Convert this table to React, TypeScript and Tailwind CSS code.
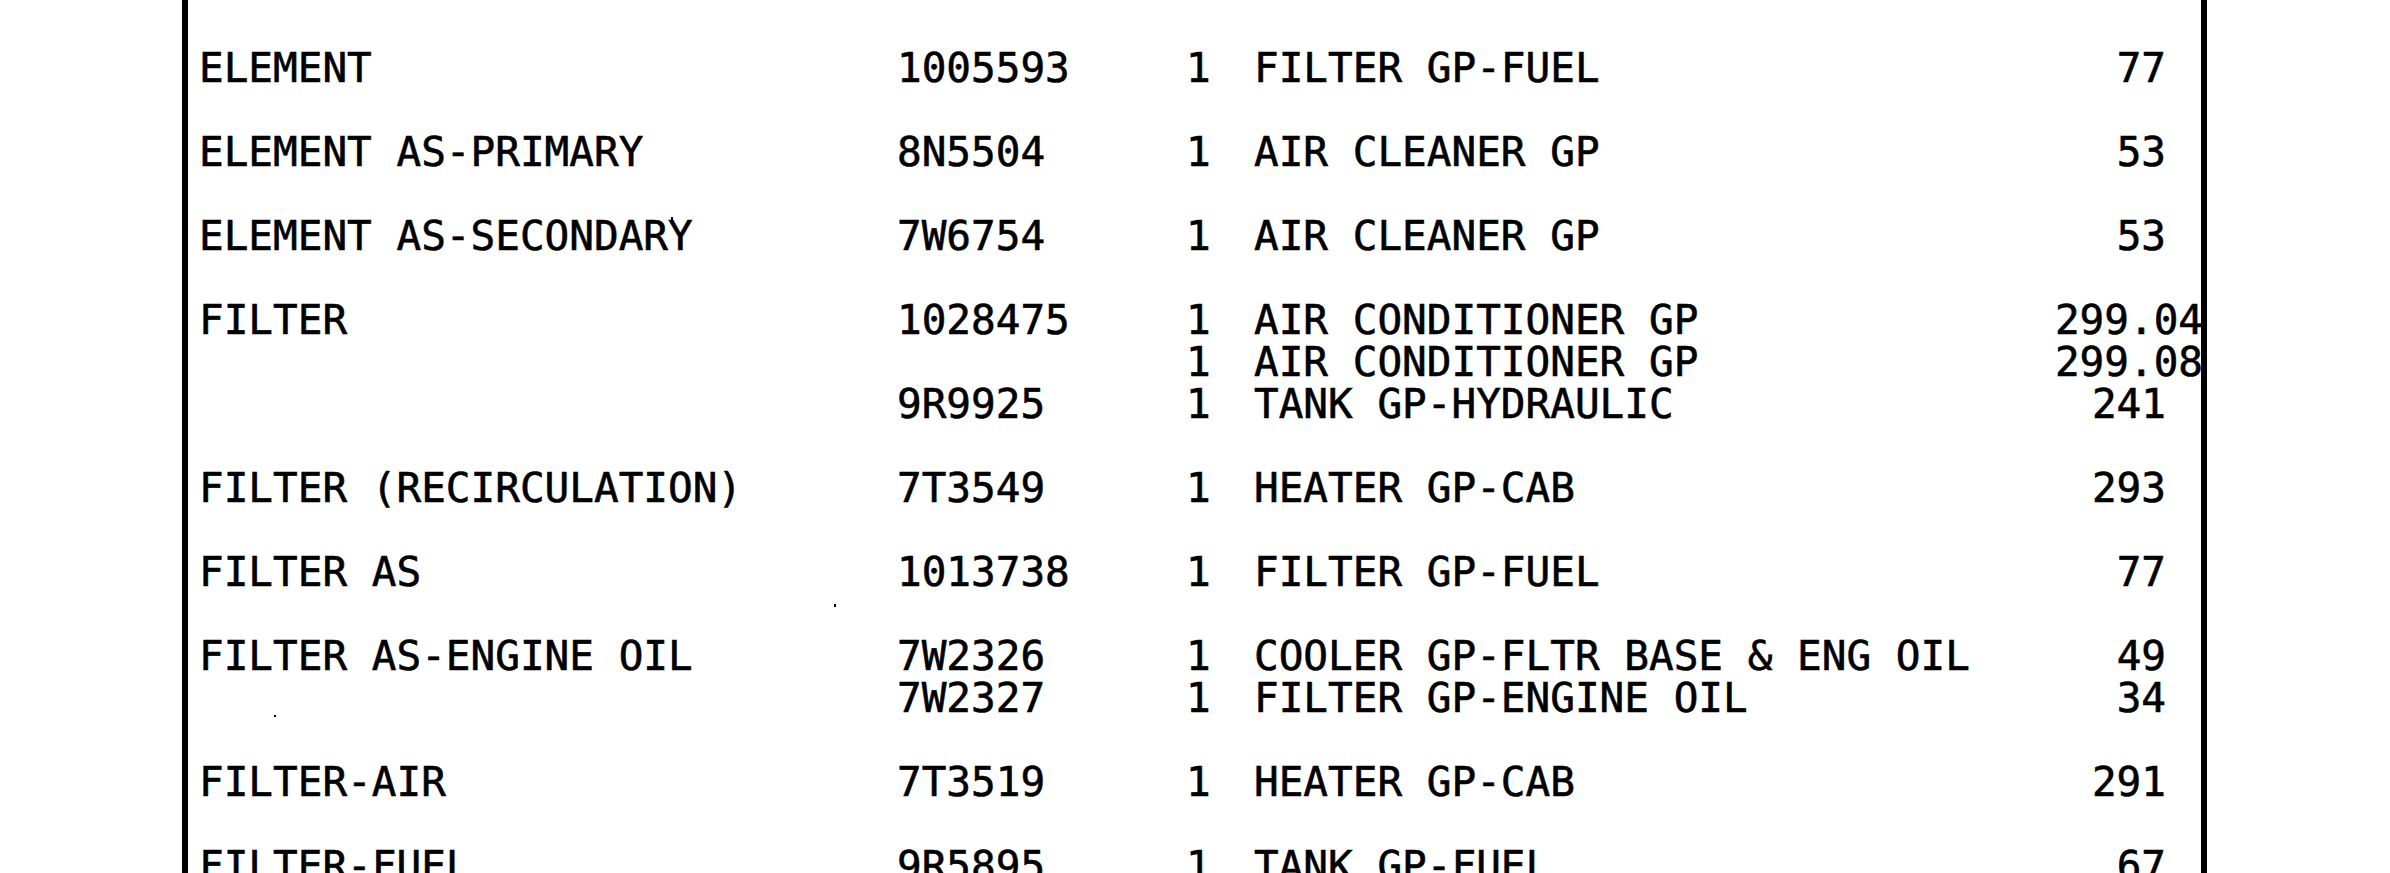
import React from "react";

type Line = { name?: string; part?: string; qty: string; desc: string; page: string; wide?: boolean };

const groups: Line[][] = [
  [{ name: "ELEMENT", part: "1005593", qty: "1", desc: "FILTER GP-FUEL", page: "77" }],
  [{ name: "ELEMENT AS-PRIMARY", part: "8N5504", qty: "1", desc: "AIR CLEANER GP", page: "53" }],
  [{ name: "ELEMENT AS-SECONDARY", part: "7W6754", qty: "1", desc: "AIR CLEANER GP", page: "53" }],
  [
    { name: "FILTER", part: "1028475", qty: "1", desc: "AIR CONDITIONER GP", page: "299.04", wide: true },
    { qty: "1", desc: "AIR CONDITIONER GP", page: "299.08", wide: true },
    { part: "9R9925", qty: "1", desc: "TANK GP-HYDRAULIC", page: "241" },
  ],
  [{ name: "FILTER (RECIRCULATION)", part: "7T3549", qty: "1", desc: "HEATER GP-CAB", page: "293" }],
  [{ name: "FILTER AS", part: "1013738", qty: "1", desc: "FILTER GP-FUEL", page: "77" }],
  [
    { name: "FILTER AS-ENGINE OIL", part: "7W2326", qty: "1", desc: "COOLER GP-FLTR BASE & ENG OIL", page: "49" },
    { part: "7W2327", qty: "1", desc: "FILTER GP-ENGINE OIL", page: "34" },
  ],
  [{ name: "FILTER-AIR", part: "7T3519", qty: "1", desc: "HEATER GP-CAB", page: "291" }],
  [{ name: "FILTER-FUEL", part: "9R5895", qty: "1", desc: "TANK GP-FUEL", page: "67" }],
];

function Row({ l }: { l: Line }) {
  return (
    <div className="flex h-[42px] items-start leading-[42px] whitespace-pre">
      <div className="w-[698px] shrink-0">{l.name ?? ""}</div>
      <div className="w-[289px] shrink-0">{l.part ?? ""}</div>
      <div className="w-[68px] shrink-0">{l.qty}</div>
      <div className="flex-1">{l.desc}</div>
      <div className={l.wide ? "text-right mr-[-37px] relative z-10" : "text-right"}>{l.page}</div>
    </div>
  );
}

export default function App() {
  return (
    <div
      className="relative flex h-[873px] w-[2390px] overflow-hidden bg-white text-black"
      style={{ fontFamily: '"DejaVu Sans Mono", monospace' }}
    >
      <div className="w-[182px] shrink-0" />
      <div className="w-[6px] shrink-0 bg-black" />
      <div className="flex w-[2013px] shrink-0 flex-col gap-[42px] pl-[11px] pr-[35px] pt-[47px] text-[41px] [-webkit-text-stroke:0.6px_black]">
        {groups.map((g, i) => (
          <div key={i} className="flex flex-col">
            {g.map((l, j) => (
              <Row key={j} l={l} />
            ))}
          </div>
        ))}
      </div>
      <div className="w-[6px] shrink-0 bg-black" />
      <div className="flex-1" />
      <span className="absolute left-[834px] top-[604px] h-[3px] w-[2px] bg-black" />
      <span className="absolute left-[274px] top-[715px] h-[2px] w-[2px] bg-black" />
      <span className="absolute left-[671px] top-[217px] h-[3px] w-[2px] bg-black" />
    </div>
  );
}
